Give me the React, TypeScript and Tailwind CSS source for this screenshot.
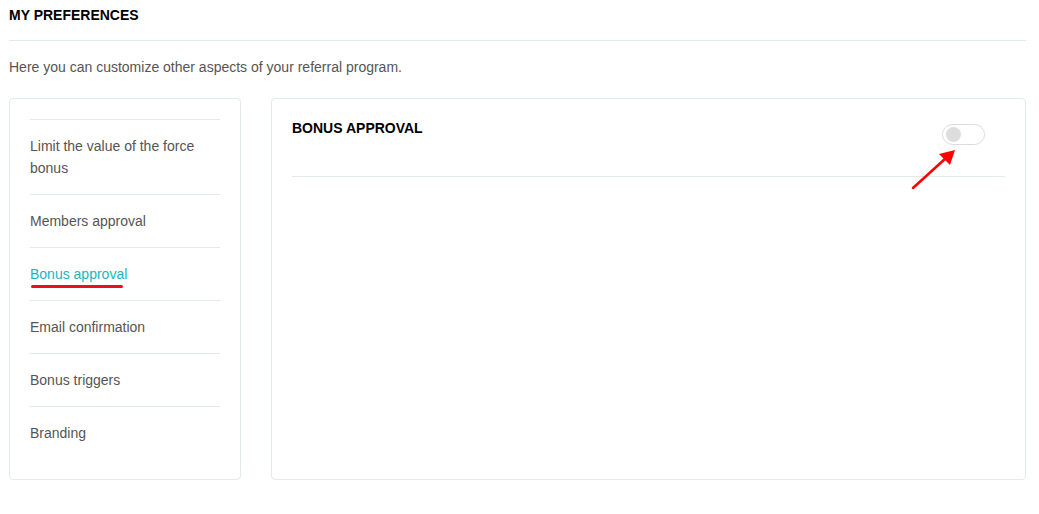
const items = [
  "Limit the value of the force bonus",
  "Members approval",
  "Bonus approval",
  "Email confirmation",
  "Bonus triggers",
  "Branding",
];

const font = { fontFamily: '"Liberation Sans", Arial, sans-serif' };

export default function App() {
  const active = "Bonus approval";

  return (
    <div className="w-[1039px] h-[514px] bg-white relative" style={font}>
      <div className="ml-[9px] w-[1017px]">
        <div className="pt-[5px] h-[41px] border-b border-[#e2eaea]">
          <h2 className="text-[14px] leading-5 font-bold text-black">MY PREFERENCES</h2>
        </div>
        <p className="mt-[16px] text-[14px] leading-5 text-[#555]">
          Here you can customize other aspects of your referral program.
        </p>

        <div className="flex gap-[30px] mt-[21px]">
          <div className="w-[232px] h-[382px] border border-[#e2eaea] rounded-[4px] px-5 pt-5">
            {items.map((it) => (
              <div key={it} className="border-t border-[#e2eaea] py-[15px]">
                <div
                  className={
                    "relative text-[14px] leading-[22px] " +
                    (it === active ? "text-[#19b5c2]" : "text-[#555]")
                  }
                >
                  {it}
                  {it === active && (
                    <span className="absolute left-[1px] top-[22px] w-[92px] h-[3px] rounded-full bg-[#ee1111]" />
                  )}
                </div>
              </div>
            ))}
          </div>

          <div className="flex-1 h-[382px] border border-[#e2eaea] rounded-[4px] px-5 pt-[19px]">
            <div className="h-[59px] border-b border-[#e2eaea] flex justify-between items-start">
              <h3 className="text-[14px] leading-5 font-bold text-black">BONUS APPROVAL</h3>
              <button className="mt-[6px] mr-5 w-[43px] h-[21px] rounded-full border border-[#dcdcdc] bg-white flex items-center px-[3px]">
                <span className="w-[15px] h-[15px] rounded-full bg-[#dddddd]" />
              </button>
            </div>
          </div>
        </div>
      </div>

      <svg className="absolute left-0 top-0 pointer-events-none" width="1039" height="514">
        <line x1="913" y1="188" x2="946" y2="158" stroke="#f00" strokeWidth="2.5" strokeLinecap="round" />
        <polygon points="955,150 950,165 939,154" fill="#f00" />
      </svg>
    </div>
  );
}
